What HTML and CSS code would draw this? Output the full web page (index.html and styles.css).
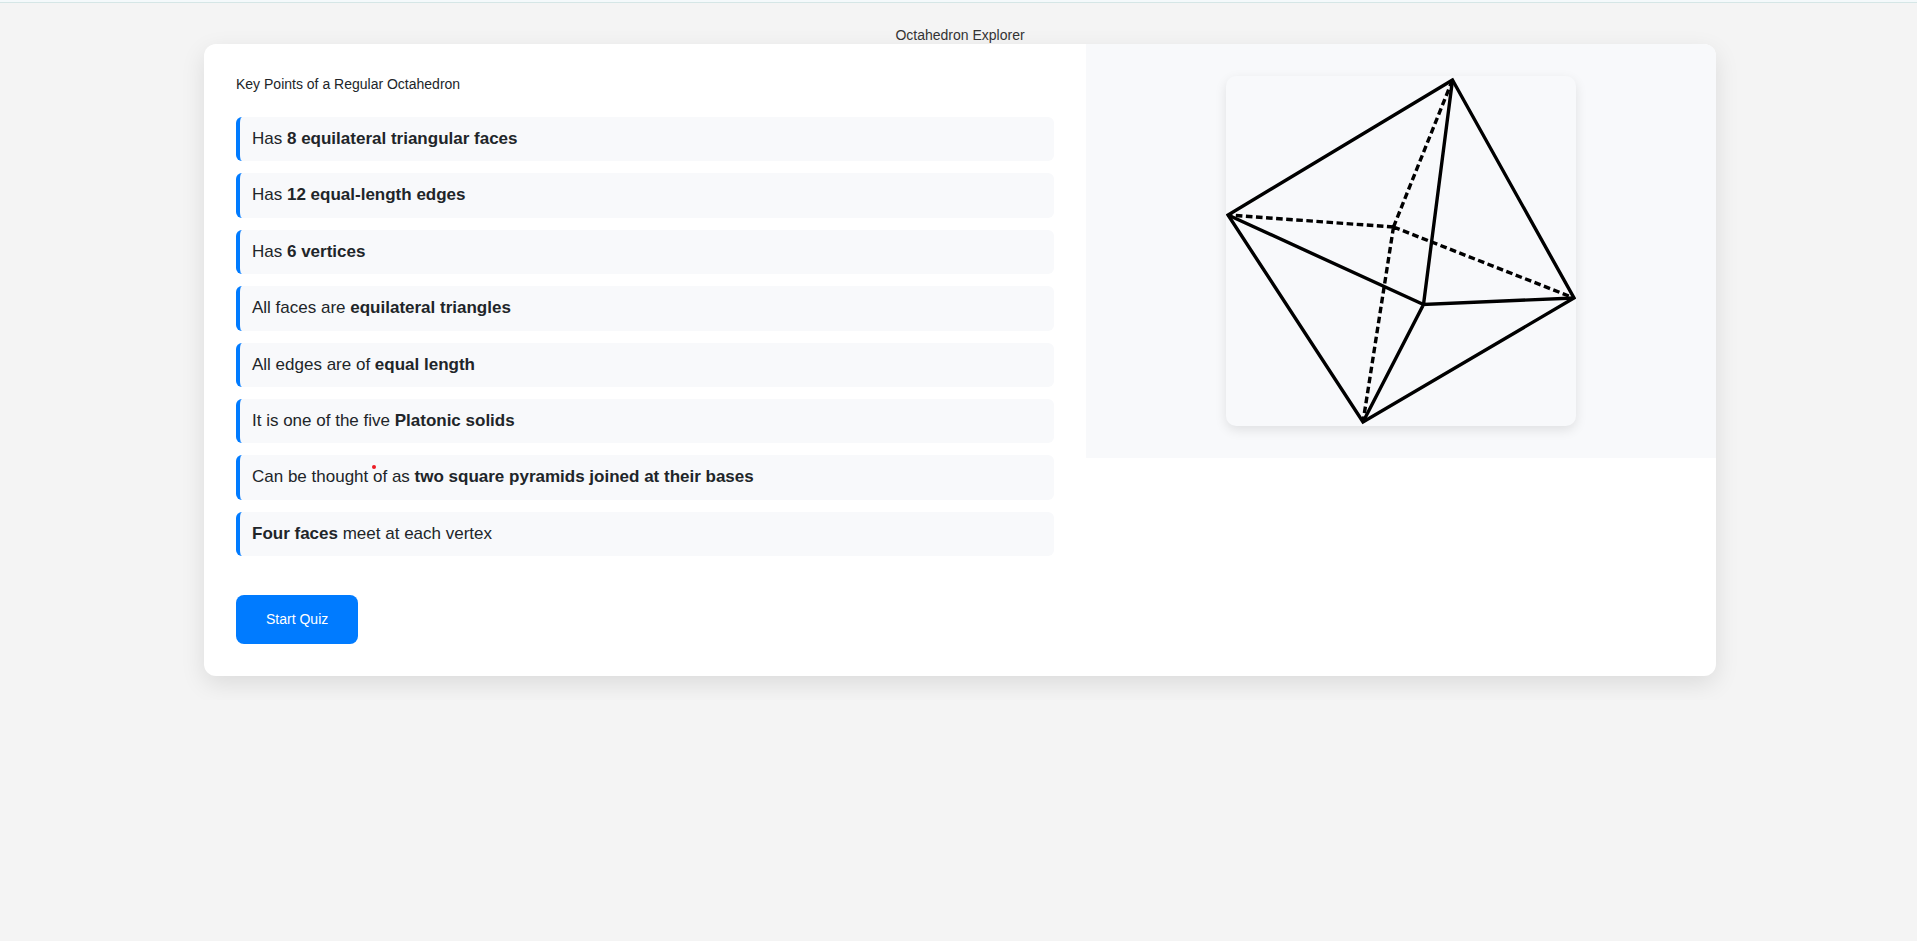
FILE: index.html
```html
<!DOCTYPE html>
<html lang="en">
<head>
<meta charset="utf-8">
<title>Octahedron Explorer</title>
<link rel="stylesheet" href="styles.css">
</head>
<body>
<div class="top-strip"></div>
<main class="page">
  <h1 class="title">Octahedron Explorer</h1>
  <div class="card">
    <section class="info">
      <h2 class="subtitle">Key Points of a Regular Octahedron</h2>
      <ul class="points">
        <li class="point">Has <strong>8 equilateral triangular faces</strong></li>
        <li class="point">Has <strong>12 equal-length edges</strong></li>
        <li class="point">Has <strong>6 vertices</strong></li>
        <li class="point">All faces are <strong>equilateral triangles</strong></li>
        <li class="point">All edges are of <strong>equal length</strong></li>
        <li class="point">It is one of the five <strong>Platonic solids</strong></li>
        <li class="point">Can be thought <span class="marked">of</span> as <strong>two square pyramids joined at their bases</strong></li>
        <li class="point"><strong>Four faces</strong> meet at each vertex</li>
      </ul>
      <button class="start" type="button">Start Quiz</button>
    </section>
    <section class="figure">
      <svg class="solid" viewBox="0 0 350 350" role="img" aria-label="Octahedron with hidden edges dashed">
        <g fill="none" stroke="#000" stroke-width="3.4">
          <path d="M226.5 4 2 139 137 346 348 222Z"/>
          <path d="M226.5 4 197.5 228.5 348 222M2 139 197.5 228.5 137 346"/>
          <path stroke-dasharray="6.6 3.5" d="M167.5 151 226.5 4M167.5 151 2 139M167.5 151 348 222M167.5 151 137 346"/>
        </g>
      </svg>
    </section>
  </div>
</main>
</body>
</html>
```
FILE: styles.css
```css
* {
  box-sizing: border-box;
}

body {
  margin: 0;
  background: #f4f4f4;
  color: #212529;
  font-family: "Liberation Sans", Arial, sans-serif;
  font-size: 14px;
  line-height: 1.2;
}

.top-strip {
  height: 3px;
  background: #f4f9fb;
  border-bottom: 1px solid #d5e6e6;
}

.page {
  max-width: 1515px;
  margin: 0 auto;
  padding: 24px 0 24px 3px;
}

.title {
  margin: 0;
  font-size: 14px;
  font-weight: 400;
  line-height: 17px;
  text-align: center;
  color: #333;
}

.card {
  display: grid;
  grid-template-columns: 7fr 5fr;
  align-items: start;
  overflow: hidden;
  background: #fff;
  border-radius: 12px;
  box-shadow: 0 8px 24px rgba(0, 0, 0, 0.1);
}

.info {
  padding: 32px;
}

.subtitle {
  margin: 0 0 24px;
  font-size: 14px;
  font-weight: 400;
  line-height: 17px;
}

.points {
  display: grid;
  gap: 12px;
  margin: 0 0 39px;
  padding: 0;
  list-style: none;
}

.point {
  padding: 12px;
  background: #f8f9fb;
  border-left: 4px solid #007bff;
  border-radius: 6px;
  font-size: 17px;
}

.marked {
  position: relative;
}

.marked::before {
  content: "";
  position: absolute;
  top: -2px;
  left: -1px;
  width: 4px;
  height: 4px;
  border-radius: 50%;
  background: #ed1c24;
}

.start {
  display: block;
  padding: 16px 30px;
  border: 0;
  border-radius: 8px;
  background: #007bff;
  color: #fff;
  font: inherit;
  line-height: 17px;
}

.figure {
  display: flex;
  justify-content: center;
  padding: 32px;
  background: #f8f9fb;
}

.solid {
  display: block;
  width: 100%;
  max-width: 350px;
  border-radius: 10px;
  background: #f8f9fb;
  box-shadow: 0 4px 12px rgba(0, 0, 0, 0.1);
}
```
